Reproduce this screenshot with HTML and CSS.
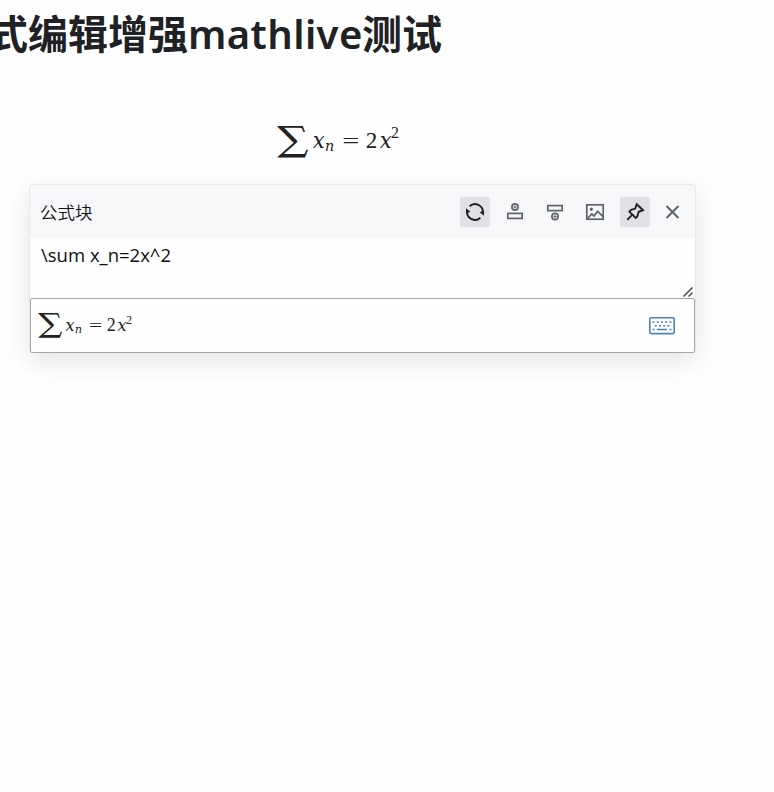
FILE: index.html
```
<!DOCTYPE html>
<html lang="zh-CN">
<head>
<meta charset="utf-8">
<title>公式编辑增强mathlive测试</title>
<link rel="stylesheet" href="styles.css">
</head>
<body>
<h1 class="title"><span class="cjk">式编辑增强</span><span class="latin">mathlive</span><span class="cjk">测试</span></h1>
<div class="math block-math">
  <span class="sum">∑</span><span class="var">𝑥</span><span class="sub">𝑛</span><span class="eq">=</span><span class="num">2</span><span class="var">𝑥</span><span class="sup">2</span>
</div>
<section class="panel">
  <header class="toolbar">
    <span class="label">公式块</span>
    <button class="tool active"><svg viewBox="0 0 20 20"><path d="M4.6 4.3A7.9 7.9 0 0 1 17.9 10.5M15.4 15.7A7.9 7.9 0 0 1 2.1 9.5" fill="none" stroke="currentColor" stroke-width="1.9"/><path d="M1 6.2v5.3l4.5-1.8zM19 13.8V8.5l-4.5 1.8z"/></svg></button>
    <button class="tool"><svg viewBox="0 0 20 20" class="line"><rect x="2.8" y="11.4" width="14.4" height="5"/><circle cx="10" cy="5" r="3.1"/><path d="M10 3.5v3M8.5 5h3" stroke-width="1.1"/></svg></button>
    <button class="tool"><svg viewBox="0 0 20 20" class="line"><rect x="2.8" y="3.6" width="14.4" height="5"/><circle cx="10" cy="14.5" r="3.1"/><path d="M10 13v3M8.5 14.5h3" stroke-width="1.1"/></svg></button>
    <button class="tool"><svg viewBox="0 0 20 20" class="line"><rect x="1.8" y="2.8" width="16.4" height="14.4"/><path d="M2 17l4.8-5 2.3 2 3.5-4.8 5.4 5.5"/><circle cx="6.3" cy="7.3" r="1.2" fill="currentColor" stroke-width="1"/></svg></button>
    <button class="tool active"><svg viewBox="0 0 20 20" class="line pin"><path d="M11.8 2.2l6.2 6-4.3 1.6-1.5 4.9-1.5 1.2-6.3-6.3 1.3-1.5 4.5-1.5z"/><path d="M7.4 12.6L2.2 17.8"/></svg></button>
    <button class="tool close"><svg viewBox="0 0 20 20" class="line"><path d="M4.5 4l12 12M16.5 4L4.5 16" stroke-width="2.1"/></svg></button>
  </header>
  <div class="source"><span class="code">\sum x_n=2x^2</span>
    <svg class="grip" viewBox="0 0 12 12"><path d="M1.5 10.5l9-9M6.5 10.5l4-4"/></svg>
  </div>
  <div class="field">
    <div class="math preview">
      <span class="sum">∑</span><span class="var">𝑥</span><span class="sub">𝑛</span><span class="eq">=</span><span class="num">2</span><span class="var">𝑥</span><span class="sup">2</span>
    </div>
    <svg class="keyboard" viewBox="0 0 28 20"><rect x="1.8" y="1.8" width="24.4" height="15.8" rx="1.5"/><path d="M4.5 6h2M8.8 6h2M13 6h2M17.2 6h2M21.5 6h2M6.7 9.7h2M11 9.7h2M15.2 9.7h2M19.4 9.7h2M4.5 13.5h2M9 13.5h10M21.5 13.5h2"/></svg>
  </div>
</section>
</body>
</html>
```
FILE: styles.css
```
* { box-sizing: border-box; }
body {
  margin: 0;
  height: 792px;
  overflow: hidden;
  background: #fefefe;
  color: #202124;
  font-family: "Open Sans", "Noto Sans CJK SC", sans-serif;
}
.title {
  display: flex;
  align-items: baseline;
  height: 60px;
  margin: 0 0 0 -12px;
  font-size: 40px;
  line-height: 64px;
  font-weight: 700;
  white-space: nowrap;
}
.cjk { font-family: "Noto Sans CJK SC", sans-serif; }
.latin { width: 174px; font-family: "Noto Sans", sans-serif; font-weight: 600; letter-spacing: .4px; }
.math {
  display: flex;
  align-items: baseline;
  line-height: 1;
  font-family: "DejaVu Math TeX Gyre", "Liberation Serif", serif;
  white-space: nowrap;
}
.math span { display: block; flex: none; }
.math .sum { width: 1.54em; transform: scale(1.7, 1.38); transform-origin: 0 56%; text-indent: -.065em; }
.var { width: .54em; transform: scaleX(.95); }
.sub { width: .88em; margin-left: .13em; font-size: .66em; transform: translateY(.22em); }
.math .eq { width: 1.32em; padding-left: .24em; font-family: "Liberation Serif", serif; transform: scaleX(1.38); transform-origin: .24em 50%; }
.num { width: .52em; font-family: "Liberation Serif", serif; transform: scale(1.05); }
.sup { margin-left: .08em; font-family: "Liberation Serif", serif; font-size: .72em; transform: translateY(-.6em); }
.block-math { height: 54px; margin: 70px 0 0 277px; font-size: 22px; }
.panel {
  width: 667px;
  height: 169px;
  margin-left: 29px;
  border: 1px solid #e7e8ea;
  border-radius: 4px;
  background: #fefefe;
  box-shadow: 0 8px 24px rgba(40, 50, 70, .12);
}
.toolbar {
  display: flex;
  align-items: center;
  height: 53px;
  padding: 0 11px 0 10px;
  background: #f6f7f9;
  border-radius: 4px 4px 0 0;
}
.label { margin-right: auto; font: 350 17.5px "Noto Sans CJK SC", sans-serif; color: #111; }
.tool {
  display: grid;
  place-items: center;
  width: 30px;
  height: 30px;
  margin-right: 10px;
  padding: 0;
  border: 0;
  border-radius: 2px;
  background: none;
  color: #5f6368;
}
.tool svg { width: 20px; height: 20px; fill: currentColor; }
.tool .line { fill: none; stroke: currentColor; stroke-width: 1.7; }
.tool .pin { stroke-width: 1.9; }
.tool.active { background: #e0e1e4; color: #202124; }
.tool.close { width: 24px; margin: 0; }
.source { display: flex; justify-content: space-between; height: 60px; padding: 4px 1px 0 11px; }
.code { font: 18.5px/25px "Open Sans", sans-serif; color: #111; }
.grip { width: 12px; height: 12px; align-self: flex-end; fill: none; stroke: #505155; stroke-width: 1.6; }
.field {
  display: flex;
  align-items: center;
  justify-content: space-between;
  height: 55px;
  padding: 0 18px 0 7px;
  border: 1px solid #a5a6a8;
  border-radius: 2px;
}
.preview { font-size: 17px; color: #222; }
.keyboard { width: 28px; height: 20px; fill: none; stroke: #4c82b5; stroke-width: 1.6; }
```
